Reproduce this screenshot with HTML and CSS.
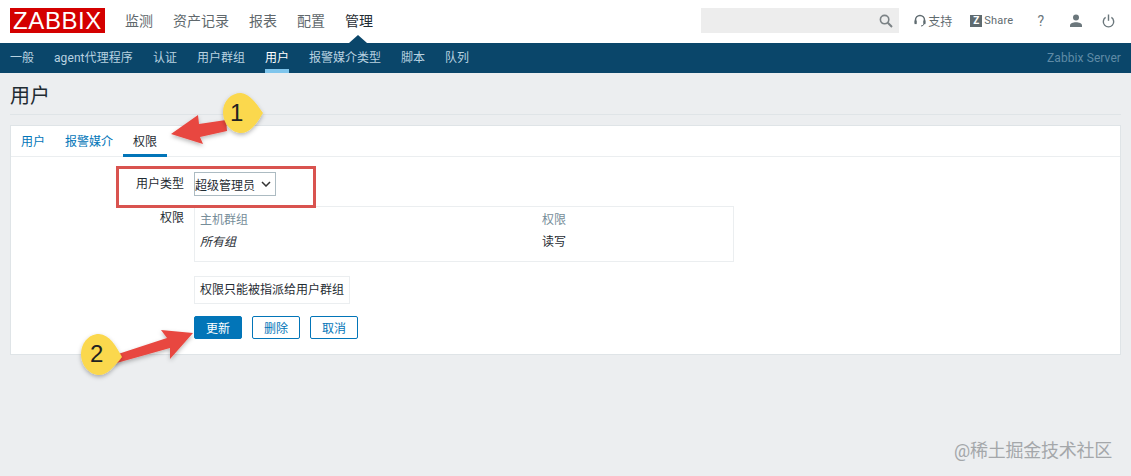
FILE: index.html
```html
<!DOCTYPE html>
<html lang="zh">
<head>
<meta charset="utf-8">
<title>用户</title>
<link rel="stylesheet" href="styles.css">
</head>
<body>
<header class="top">
  <div class="logo">ZABBIX</div>
  <nav class="mainnav">
    <a>监测</a><a>资产记录</a><a>报表</a><a>配置</a><a class="on">管理</a>
  </nav>
  <div class="tools">
    <div class="search">
      <svg width="14" height="14" viewBox="0 0 14 14"><circle cx="5.6" cy="5.6" r="4.2" fill="none" stroke="#7b8285" stroke-width="1.6"/><path d="M8.8 8.8 L13 13" stroke="#7b8285" stroke-width="2"/></svg>
    </div>
    <a class="tool support">
      <svg width="12" height="13" viewBox="0 0 12 13"><path d="M1.5 9 V6 a4.5 4.5 0 0 1 9 0 V9" fill="none" stroke="#5f6b70" stroke-width="1.5"/><rect x="0.5" y="6.5" width="2.2" height="3.6" fill="#5f6b70"/><rect x="9.3" y="6.5" width="2.2" height="3.6" fill="#5f6b70"/><path d="M10 10 Q9.5 12 7 12" fill="none" stroke="#5f6b70"/></svg>
      <span>支持</span>
    </a>
    <a class="tool share"><span class="zbox">Z</span><span class="sharetext">Share</span></a>
    <a class="tool help">?</a>
    <a class="tool user">
      <svg width="14" height="13" viewBox="0 0 14 13"><circle cx="7" cy="3.4" r="3" fill="#6b777c"/><path d="M1 13 V11.6 C1 9.2 4 8.2 7 8.2 S13 9.2 13 11.6 V13 Z" fill="#6b777c"/></svg>
    </a>
    <a class="tool power">
      <svg width="13" height="14" viewBox="0 0 13 14"><path d="M3.6 3.4 A5.2 5.2 0 1 0 9.4 3.4" fill="none" stroke="#6b777c" stroke-width="1.4"/><path d="M6.5 0.5 V6.8" stroke="#6b777c" stroke-width="1.4"/></svg>
    </a>
  </div>
</header>
<nav class="subnav">
  <a>一般</a><a class="agent">agent代理程序</a><a>认证</a><a>用户群组</a><a class="on">用户</a><a>报警媒介类型</a><a>脚本</a><a>队列</a>
  <span class="server">Zabbix Server</span>
</nav>
<main class="page">
  <h1 class="title">用户</h1>
  <section class="card">
    <div class="tabs">
      <a>用户</a><a>报警媒介</a><a class="on">权限</a>
    </div>
    <div class="form">
      <label class="lab lab-type">用户类型</label>
      <div class="fake-select">超级管理员<svg width="10" height="6" viewBox="0 0 10 6"><path d="M1 1 L5 5 L9 1" fill="none" stroke="#333" stroke-width="1.5"/></svg></div>
      <label class="lab lab-perm">权限</label>
      <div class="perm">
        <div class="th"><span class="c1">主机群组</span><span>权限</span></div>
        <div class="td"><span class="c1 it">所有组</span><span>读写</span></div>
      </div>
      <div class="notice">权限只能被指派给用户群组</div>
      <div class="btns">
        <button class="btn primary">更新</button><button class="btn">删除</button><button class="btn">取消</button>
      </div>
    </div>
  </section>
</main>

<div class="redbox"></div>
<svg class="annot" width="1131" height="476" viewBox="0 0 1131 476">
  <defs>
    <filter id="sh" x="-20%" y="-20%" width="140%" height="150%"><feDropShadow dx="0" dy="2" stdDeviation="2" flood-color="#000" flood-opacity=".28"/></filter>
  </defs>
  <path d="M171 134 L198 115 L199 124 L226 120 L227 131 L200 137 L203 144 Z" fill="#e8473f" filter="url(#sh)"/>
  <path d="M241 93 C231 93 223 101 223 112 C223 124 232 133 241 133 C250 133 256 125 263 113 C256 103 250 94 241 93 Z" fill="#fbd84e" filter="url(#sh)"/>
  <path d="M193 333 L161 330 L167 338 L112 356 L113 364 L170 348 L170 359 Z" fill="#e8473f" filter="url(#sh)"/>
  <path d="M99 334 C88 334 81 344 81 354 C81 366 90 375 99 375 C107 375 113 368 122 357 C116 346 110 335 99 334 Z" fill="#fbd84e" filter="url(#sh)"/>
</svg>
<span class="num n1">1</span>
<span class="num n2">2</span>
<span class="mark">@稀土掘金技术社区</span>
</body>
</html>
```
FILE: styles.css
```css
* { box-sizing: border-box; }
html, body { margin: 0; padding: 0; }
body {
  width: 1131px; height: 476px; overflow: hidden; position: relative;
  background: #eceef0; color: #1f2c33;
  font-family: Roboto, "Noto Sans CJK SC", sans-serif; font-size: 12px;
}
a { display: block; }
.top { height: 43px; background: #fff; display: flex; align-items: center; padding: 0 10px 2px; }
.logo {
  width: 95px; height: 25px; background: #d40000; color: #fff;
  font: 400 24px/25px "Liberation Sans", sans-serif; letter-spacing: .6px; text-align: center;
}
.mainnav { display: flex; gap: 20px; margin-left: 20px; margin-top: -1px; font-size: 14px; color: #60686c; }
.mainnav .on { color: #1f2c33; }
.tools { margin-left: auto; display: flex; align-items: center; color: #5f6b70; }
.search {
  width: 198px; height: 25px; background: #ededed; display: flex; align-items: center;
  justify-content: flex-end; padding-right: 6px;
}
.tool { display: flex; align-items: center; }
.support { margin-left: 15px; gap: 2px; font-size: 12px; }
.share { margin-left: 18px; gap: 2px; font-size: 11px; }
.sharetext { letter-spacing: .2px; }
.zbox { width: 12px; height: 12px; background: #5f6b70; color: #fff; font-size: 10px; font-weight: 700; line-height: 12px; text-align: center; }
.help { margin-left: 24px; font-size: 14px; color: #6b777c; }
.user { margin-left: 25px; }
.power { margin-left: 19px; margin-right: 6px; }
.subnav {
  height: 30px; background: #0a466a; color: #b8d2e0; display: flex; gap: 20px;
  padding: 0 10px; align-items: stretch; line-height: 30px; position: relative;
}
.agent { letter-spacing: .08px; }
.subnav .on { color: #fff; border-bottom: 4px solid #7fc5ec; }
.subnav::before {
  content: ""; position: absolute; left: 349px; top: -8px; width: 18px; height: 16px;
  background: #0a466a; clip-path: polygon(50% 0, 100% 50%, 0 50%);
}
.server { margin-left: auto; color: #5f8ba6; letter-spacing: .08px; }
.page { padding: 0 10px; }
.title {
  margin: 0; height: 42px; border-bottom: 1px solid #dfe4e7; font-weight: 400; font-size: 20px;
  line-height: 46px; color: #1f2c33;
}
.card { margin-top: 10px; height: 230px; background: #fff; border: 1px solid #dfe4e7; }
.tabs { height: 31px; display: flex; gap: 20px; padding: 0 10px; border-bottom: 1px solid #ebeef0; color: #0275b8; line-height: 33px; }
.tabs a { height: 31px; }
.tabs .on { color: #1f2c33; padding: 0 10px; margin: 0 -10px; border-bottom: 3px solid #0275b8; }
.form {
  display: grid; grid-template-columns: 173px 1fr; column-gap: 10px; padding-top: 15px;
  justify-items: start;
}
.lab { justify-self: end; color: #1f2c33; }
.lab-type { line-height: 24px; padding-top: 0; }
.lab-perm { line-height: 24px; margin-top: 10px; }
.fake-select {
  grid-column: 2; height: 24px; width: 82px; border: 1px solid #acbbc2; background: #fff; color: #1f2c33;
  display: flex; align-items: center; justify-content: space-between; padding: 0 4px 0 0; white-space: nowrap;
}
.perm {
  grid-column: 2; margin-top: 10px; width: 540px; height: 56px; border: 1px solid #ebeef0; padding: 0 5px;
}
.th, .td { display: flex; height: 22px; line-height: 27px; }
.th { color: #768d99; }
.td { margin-top: 1px; line-height: 24px; }
.c1 { width: 342px; }
.it { font-style: italic; }
.notice { grid-column: 2; margin-top: 14px; height: 28px; line-height: 27px; border: 1px solid #ebeef0; padding: 0 5px; }
.btns { grid-column: 2; margin-top: 12px; display: flex; gap: 10px; }
.btn {
  width: 48px; height: 23px; padding: 0; border: 1px solid #0275b8; border-radius: 2px; background: #fff; color: #0275b8;
  font: 12px Roboto, "Noto Sans CJK SC", sans-serif;
}
.btn.primary { background: #0275b8; color: #fff; }
.redbox { position: absolute; left: 116px; top: 166px; width: 200px; height: 42px; border: 3px solid #d9534f; }
.annot { position: absolute; left: 0; top: 0; pointer-events: none; }
.num { position: absolute; font: 24px/28px "Liberation Sans", sans-serif; color: #222; }
.n1 { left: 230px; top: 99px; }
.n2 { left: 90px; top: 340px; }
.mark { position: absolute; left: 954px; top: 439px; font-size: 18px; line-height: 24px; letter-spacing: -.25px; color: #a4a7aa; white-space: nowrap; }
```
